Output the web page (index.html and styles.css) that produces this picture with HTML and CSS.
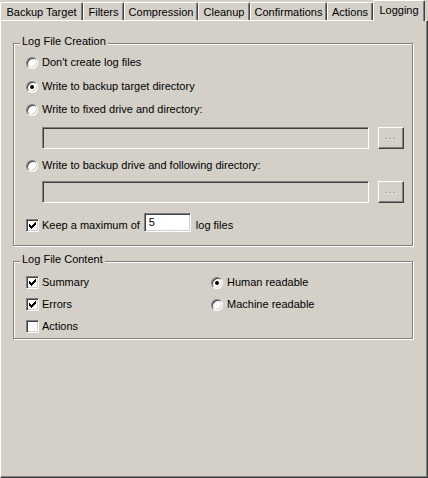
FILE: index.html
```html
<!DOCTYPE html>
<html>
<head>
<meta charset="utf-8">
<link rel="stylesheet" href="styles.css">
</head>
<body>
<div class="dialog">
  <div class="tabs">
    <div class="tab t-backup">Backup Target</div>
    <div class="tab t-filters">Filters</div>
    <div class="tab t-compression">Compression</div>
    <div class="tab t-cleanup">Cleanup</div>
    <div class="tab t-confirm">Confirmations</div>
    <div class="tab t-actions">Actions</div>
    <div class="tab t-logging selected">Logging</div>
  </div>
  <div class="panel">
    <div class="group creation">
      <span class="group-title">Log File Creation</span>
      <label class="row r1"><span class="radio"></span><span class="txt">Don't create log files</span></label>
      <label class="row r2"><span class="radio on"></span><span class="txt">Write to backup target directory</span></label>
      <label class="row r3"><span class="radio"></span><span class="txt">Write to fixed drive and directory:</span></label>
      <div class="path-row p1"><span class="edit disabled"></span><span class="btn">...</span></div>
      <label class="row r4"><span class="radio"></span><span class="txt">Write to backup drive and following directory:</span></label>
      <div class="path-row p2"><span class="edit disabled"></span><span class="btn">...</span></div>
      <div class="row max-row">
        <span class="check on"><svg width="7" height="7" viewBox="0 0 7 7" shape-rendering="crispEdges"><rect x="0" y="2" width="1" height="3"/><rect x="1" y="3" width="1" height="3"/><rect x="2" y="4" width="1" height="3"/><rect x="3" y="3" width="1" height="3"/><rect x="4" y="2" width="1" height="3"/><rect x="5" y="1" width="1" height="3"/><rect x="6" y="0" width="1" height="3"/></svg></span>
        <span class="txt">Keep a maximum of</span>
        <span class="edit num">5</span>
        <span class="txt files">log files</span>
      </div>
    </div>
    <div class="group content">
      <span class="group-title">Log File Content</span>
      <div class="content-grid">
        <div class="col">
          <label class="row c1"><span class="check on"><svg width="7" height="7" viewBox="0 0 7 7" shape-rendering="crispEdges"><rect x="0" y="2" width="1" height="3"/><rect x="1" y="3" width="1" height="3"/><rect x="2" y="4" width="1" height="3"/><rect x="3" y="3" width="1" height="3"/><rect x="4" y="2" width="1" height="3"/><rect x="5" y="1" width="1" height="3"/><rect x="6" y="0" width="1" height="3"/></svg></span><span class="txt">Summary</span></label>
          <label class="row c2"><span class="check on"><svg width="7" height="7" viewBox="0 0 7 7" shape-rendering="crispEdges"><rect x="0" y="2" width="1" height="3"/><rect x="1" y="3" width="1" height="3"/><rect x="2" y="4" width="1" height="3"/><rect x="3" y="3" width="1" height="3"/><rect x="4" y="2" width="1" height="3"/><rect x="5" y="1" width="1" height="3"/><rect x="6" y="0" width="1" height="3"/></svg></span><span class="txt">Errors</span></label>
          <label class="row c2"><span class="check"></span><span class="txt">Actions</span></label>
        </div>
        <div class="col">
          <label class="row c1"><span class="radio on"></span><span class="txt">Human readable</span></label>
          <label class="row c2"><span class="radio"></span><span class="txt">Machine readable</span></label>
        </div>
      </div>
    </div>
  </div>
</div>
</body>
</html>
```
FILE: styles.css
```css
* { box-sizing: border-box; }
html, body { margin: 0; padding: 0; }
body {
  width: 428px;
  height: 478px;
  background: #d4d0c8;
  font-family: "Liberation Sans", Arial, sans-serif;
  font-size: 11px;
  color: #000;
  overflow: hidden;
}
.dialog { width: 428px; height: 478px; display: flex; flex-direction: column; }

.tabs { display: flex; align-items: flex-end; height: 20px; position: relative; z-index: 1; }
.tab {
  height: 18px;
  border-top: 1px solid #fff;
  border-left: 1px solid #fff;
  border-right: 1px solid #404040;
  box-shadow: inset -1px 0 #808080;
  border-radius: 2px 2px 0 0;
  text-align: center;
  line-height: 18px;
  white-space: nowrap;
}
.t-backup { width: 83px; }
.t-filters { width: 41px; }
.t-compression { width: 74px; }
.t-cleanup { width: 52px; }
.t-confirm { width: 77px; }
.t-actions { width: 46px; }
.t-logging { width: 52px; }
.tab.selected {
  height: 21px;
  margin-bottom: -1px;
  background: #d4d0c8;
  line-height: 18px;
}

.panel {
  flex: 1;
  border-top: 1px solid #fff;
  border-left: 1px solid #fff;
  border-right: 1px solid #404040;
  border-bottom: 1px solid #404040;
  box-shadow: inset -1px -1px #808080;
  padding: 22px 0 0 12px;
}

.group {
  position: relative;
  width: 400px;
  border: 1px solid #808080;
  box-shadow: inset 1px 1px #fff, 1px 1px #fff;
  padding: 0 0 0 12px;
}
.group-title {
  position: absolute;
  top: -9px;
  left: 6px;
  padding: 0 2px;
  background: #d4d0c8;
  line-height: 13px;
}
.creation { padding-top: 12px; padding-bottom: 13px; }
.content { margin-top: 15px; padding-top: 14px; padding-bottom: 5px; }

.row { display: flex; align-items: center; height: 13px; }
.r2 { margin-top: 11px; }
.r3 { margin-top: 10px; }
.r4 { margin-top: 10px; }
.max-row { height: 19px; margin-top: 10px; align-items: flex-end; }
.txt { line-height: 13px; white-space: nowrap; }

.radio {
  position: relative;
  width: 12px;
  height: 12px;
  flex: none;
  border-radius: 50%;
  background: #fff;
  border: 1px solid;
  border-color: #808080 #fff #fff #808080;
  box-shadow: inset 1px 1px #404040, inset -1px -1px #d4d0c8;
  margin-right: 4px;
}
.radio.on::after {
  content: "";
  position: absolute;
  left: 3px;
  top: 3px;
  width: 4px;
  height: 4px;
  border-radius: 50%;
  background: #000;
}

.check {
  width: 13px;
  height: 13px;
  flex: none;
  background: #fff;
  border: 1px solid;
  border-color: #808080 #fff #fff #808080;
  box-shadow: inset 1px 1px #404040, inset -1px -1px #d4d0c8;
  margin-right: 3px;
  display: flex;
  align-items: center;
  justify-content: center;
}
.check svg { fill: #000; display: block; }

.path-row { display: flex; padding-left: 16px; height: 22px; }
.p1 { margin-top: 11px; }
.p2 { margin-top: 9px; }
.edit {
  display: block;
  height: 22px;
  border: 1px solid;
  border-color: #808080 #fff #fff #808080;
  box-shadow: inset 1px 1px #404040, inset -1px -1px #d4d0c8;
}
.edit.disabled { width: 327px; background: #d4d0c8; }
.edit.num {
  width: 47px;
  height: 19px;
  background: #fff;
  margin-left: 4px;
  padding: 0 0 0 4px;
  line-height: 17px;
}
.files { margin-left: 5px; }
.btn {
  width: 26px;
  height: 22px;
  margin-left: 9px;
  border: 1px solid;
  border-color: #fff #404040 #404040 #fff;
  box-shadow: inset -1px -1px #808080;
  color: #808080;
  text-shadow: 1px 1px #fff;
  text-align: center;
  line-height: 16px;
  font-size: 10px;
  letter-spacing: 1px;
}

.content-grid { display: grid; grid-template-columns: 185px 1fr; }
.col { display: flex; flex-direction: column; }
.c2 { margin-top: 9px; }
```
